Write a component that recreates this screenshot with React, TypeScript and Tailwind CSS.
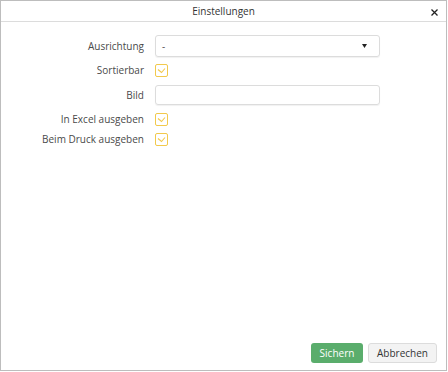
import React from 'react';

function Check() {
  return (
    <span className="w-[13px] h-[13px] border border-[#f2c94c] rounded-[2px] bg-white flex items-center justify-center">
      <svg width="9" height="7" viewBox="0 0 9 7" fill="none">
        <path d="M1 2.5 L4.5 5.5 L8 1.5" stroke="#f2c94c" strokeWidth="1.1" />
      </svg>
    </span>
  );
}

function Row({ label, children, className }: { label: string; children: React.ReactNode; className: string }) {
  return (
    <div className={'flex items-center ' + className}>
      <span className="w-[143px] text-right text-[10px] text-[#4a4a4a] leading-none">{label}</span>
      <div className="ml-[11px] flex items-center">{children}</div>
    </div>
  );
}

export default function App() {
  return (
    <div className="w-[447px] h-[371px] border border-[#bdbdbd] bg-white flex flex-col" style={{ fontFamily: '"Open Sans", sans-serif' }}>
      {/* Header */}
      <div className="h-[21px] border-b border-[#dcdcdc] flex items-center justify-center relative">
        <span className="text-[10px] text-[#333]">Einstellungen</span>
        <svg className="absolute right-[8px] top-[8px]" width="7" height="7" viewBox="0 0 7 7">
          <path d="M0.5 0.5 L6.5 6.5 M6.5 0.5 L0.5 6.5" stroke="#222" strokeWidth="1.3" />
        </svg>
      </div>

      {/* Body */}
      <div className="flex-1 flex flex-col pt-[13px]">
        <Row label="Ausrichtung" className="h-[22px]">
          <div className="w-[225px] h-[22px] border border-[#dcdcdc] rounded-[3px] shadow-[0_1px_1px_rgba(0,0,0,0.06)] flex items-center justify-between px-[6px]">
            <span className="text-[10px] text-[#555]">-</span>
            <svg width="5" height="4" viewBox="0 0 5 4" className="mr-[6px]">
              <path d="M0 0 H5 L2.5 4 Z" fill="#222" />
            </svg>
          </div>
        </Row>
        <Row label="Sortierbar" className="h-[14px] mt-[6px]">
          <Check />
        </Row>
        <Row label="Bild" className="h-[20px] mt-[8px]">
          <div className="w-[225px] h-[20px] border border-[#dcdcdc] rounded-[3px] shadow-[0_1px_1px_rgba(0,0,0,0.06)]" />
        </Row>
        <Row label="In Excel ausgeben" className="h-[14px] mt-[7px]">
          <Check />
        </Row>
        <Row label="Beim Druck ausgeben" className="h-[14px] mt-[6px]">
          <Check />
        </Row>
      </div>

      {/* Footer */}
      <div className="flex justify-end gap-[5px] pr-[9px] pb-[7px]">
        <button className="h-[20px] w-[52px] rounded-[3px] bg-[#5aad6c] text-white text-[10px] leading-none">Sichern</button>
        <button className="h-[20px] w-[69px] rounded-[3px] bg-[#f3f3f3] border border-[#dcdcdc] text-[#333] text-[10px] leading-none">Abbrechen</button>
      </div>
    </div>
  );
}
